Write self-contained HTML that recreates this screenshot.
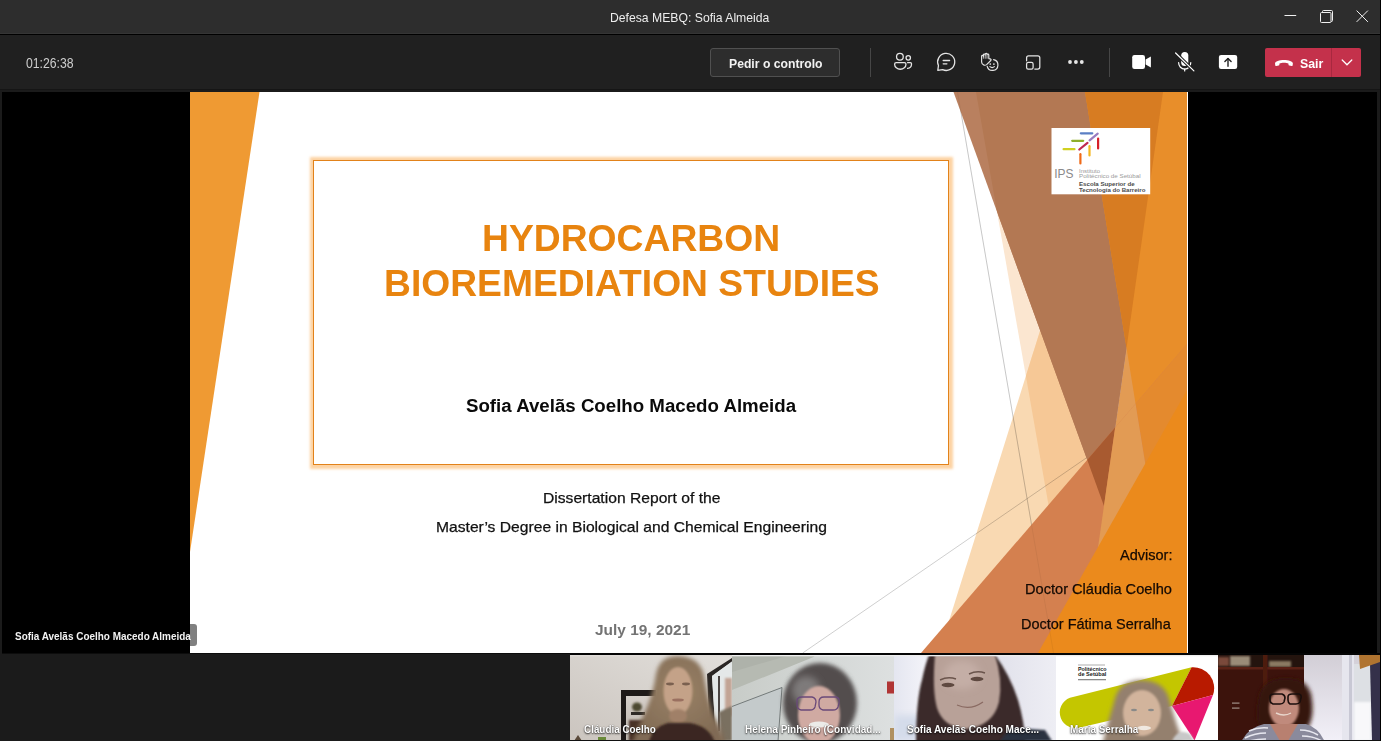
<!DOCTYPE html>
<html><head><meta charset="utf-8">
<style>
*{margin:0;padding:0;box-sizing:border-box}
html,body{width:1381px;height:741px;overflow:hidden;background:#1b1b1b;font-family:"Liberation Sans",sans-serif;position:relative}
.a{position:absolute}
.t{white-space:nowrap;line-height:1}
.sh{text-shadow:0 1px 2px rgba(0,0,0,0.8),0 0 1px rgba(0,0,0,0.6)}
</style></head><body>
<div class="a" style="left:0;top:0;width:1381px;height:33px;background:#2d2d2d"></div>
<div class="a" style="left:0;top:33px;width:1381px;height:1px;background:#353535"></div>
<div class="a" style="left:0;top:34px;width:1381px;height:1px;background:#000"></div>
<div class="a t" style="left:610.07px;top:11.29px;font-size:13.20px;font-weight:normal;color:#ededed;transform:scaleX(0.9251);transform-origin:0 0">Defesa MEBQ: Sofia Almeida</div>
<div class="a" style="left:0;top:35px;width:1381px;height:54px;background:#202020"></div>
<div class="a" style="left:0;top:89px;width:1381px;height:1px;background:#151515"></div>
<div class="a" style="left:0;top:90px;width:1381px;height:2px;background:#1b1b1b"></div>
<div class="a t" style="left:25.81px;top:56.68px;font-size:13.80px;font-weight:normal;color:#cdcdcd;transform:scaleX(0.8865);transform-origin:0 0">01:26:38</div>
<div class="a" style="left:710px;top:48px;width:130px;height:29px;background:#2d2d2d;border:1px solid #505050;border-radius:3px"></div>
<div class="a t" style="left:729.18px;top:56.90px;font-size:13.30px;font-weight:bold;color:#f2f2f2;transform:scaleX(0.9170);transform-origin:0 0">Pedir o controlo</div>
<div class="a" style="left:870px;top:48px;width:1px;height:29px;background:#464646"></div>
<div class="a" style="left:1109px;top:48px;width:1px;height:29px;background:#464646"></div>
<div class="a" style="left:1265px;top:48px;width:96px;height:29px;background:#c4314b;border-radius:2px"></div>
<div class="a" style="left:1331px;top:48px;width:1px;height:29px;background:#a8283f"></div>
<div class="a t" style="left:1299.85px;top:57.15px;font-size:13.00px;font-weight:bold;color:#ffffff;transform:scaleX(0.9478);transform-origin:0 0">Sair</div>
<svg class="a" style="left:0;top:0" width="1381" height="92" viewBox="0 0 1381 92">
<g stroke="#f0f0f0" stroke-width="1" fill="none">
<line x1="1284.5" y1="15.5" x2="1296.2" y2="15.5"/>
<rect x="1320.5" y="12.5" width="10.5" height="10" rx="1"/>
<path d="M1322.5,12.5 V11.5 a1,1 0 0 1 1,-1 H1331.5 a1,1 0 0 1 1,1 V20.5 a1,1 0 0 1 -1,1 H1331"/>
<line x1="1356.6" y1="10.6" x2="1367.9" y2="21.9"/>
<line x1="1367.9" y1="10.6" x2="1356.6" y2="21.9"/>
</g>
<g stroke="#e4e4e4" stroke-width="1.3" fill="none" stroke-linecap="round" stroke-linejoin="round">
<circle cx="899.9" cy="56.8" r="3.35"/>
<circle cx="908.25" cy="57.85" r="2.2"/>
<path d="M896.2,62.55 H904.4 A1.55,1.55 0 0 1 905.95,64.1 V64.5 A5.65,4.75 0 0 1 894.65,64.5 V64.1 A1.55,1.55 0 0 1 896.2,62.55 Z"/>
<path d="M907.6,62.65 H910.4 A1.1,1.1 0 0 1 911.5,63.75 V64.3 A4.3,4.2 0 0 1 907.6,68.4"/>
<path d="M938.45,65.5 L937.8,70.3 L942.6,69.65 A8.55,8.55 0 1 0 938.45,65.5 Z"/>
<line x1="943.2" y1="60.5" x2="949.6" y2="60.5"/>
<line x1="943.2" y1="63.8" x2="946.9" y2="63.8"/>
<path d="M981.6,62 V56.2 a0.9,0.9 0 0 1 1.8,0 V54.9 a0.9,0.9 0 0 1 1.8,0 V54.3 a0.9,0.9 0 0 1 1.8,0 V54.9 a0.9,0.9 0 0 1 1.8,0 V58.6 L990.2,58.9 Q991.6,59.4 990.8,60.5 L986.6,64.6 Q985.4,65.6 984,65.1 Q981.6,64.2 981.6,62 Z" stroke-width="1.15"/>
<line x1="983.4" y1="55.8" x2="983.4" y2="58.3" stroke-width="0.8"/>
<line x1="985.2" y1="55.2" x2="985.2" y2="58.3" stroke-width="0.8"/>
<line x1="987" y1="55.8" x2="987" y2="58.3" stroke-width="0.8"/>
<path d="M993.6,59.6 A5.45,5.45 0 1 1 987.2,66.3" stroke-width="1.2"/>
<path d="M989.9,66.7 Q992.1,68.6 994.4,66.7" stroke-width="1.1"/>
<path d="M1026.6,60.8 V57.8 a2,2 0 0 1 2,-2 H1037.8 a2,2 0 0 1 2,2 V67 a2,2 0 0 1 -2,2 H1034.8" stroke-width="1.25"/>
<rect x="1026.6" y="62.3" width="6.5" height="6.7" rx="1.6" stroke-width="1.25"/>
</g>
<g fill="#e6e6e6">
<circle cx="990.3" cy="64" r="0.85"/><circle cx="993.9" cy="64.1" r="0.85"/>
<circle cx="1070" cy="62" r="1.9"/><circle cx="1075.9" cy="62" r="1.9"/><circle cx="1081.8" cy="62" r="1.9"/>
</g>
<g fill="#ffffff">
<rect x="1132.2" y="54.9" width="12.8" height="14.1" rx="2.3"/>
<polygon points="1145.6,59.6 1150.9,56.6 1150.9,67.5 1145.6,64.6"/>
<rect x="1181.2" y="52" width="7.1" height="14" rx="3.55"/>
<rect x="1218.9" y="54.9" width="18.3" height="14.1" rx="2.2"/>
</g>
<g fill="none" stroke-linecap="round">
<path d="M1178.6,62.6 A6.1,6.6 0 0 0 1190.8,62.6" stroke="#fff" stroke-width="1.2"/>
<line x1="1184.7" y1="69" x2="1184.7" y2="71" stroke="#fff" stroke-width="1.2"/>
<line x1="1175.6" y1="53" x2="1193.9" y2="70.9" stroke="#202020" stroke-width="3.2"/>
<line x1="1175.6" y1="53" x2="1193.9" y2="70.9" stroke="#fff" stroke-width="1.2"/>
<line x1="1228" y1="58.6" x2="1228" y2="66.3" stroke="#202020" stroke-width="1.4"/>
<polyline points="1224.9,61.6 1228,58.5 1231.1,61.6" stroke="#202020" stroke-width="1.4" stroke-linejoin="round"/>
<polyline points="1342.2,60 1347,64.8 1351.8,60" stroke="#fff" stroke-width="1.25"/>
</g>
<path fill="#fff" d="M1275,63.6 C1275,58.7 1292.9,58.7 1292.9,63.6 L1292.6,65.4 Q1292.4,66.2 1291.6,66.1 L1289.3,65.6 Q1288.5,65.4 1288.5,64.6 L1288.4,63.5 C1286.4,62.4 1281.5,62.4 1279.5,63.5 L1279.4,64.6 Q1279.4,65.4 1278.6,65.6 L1276.3,66.1 Q1275.5,66.2 1275.3,65.4 Z"/>
</svg>
<div class="a" style="left:2px;top:92px;width:1375px;height:561px;background:#000"></div>
<svg class="a" style="left:190px;top:92px" width="998" height="561" viewBox="190 92 998 561">
<defs>
<clipPath id="cB"><polygon points="953.5,92 1163,92 1104,506"/></clipPath>
<clipPath id="cP1"><polygon points="976,92 1163,92 1120,653 1074.5,653"/></clipPath>
<clipPath id="cO1"><polygon points="921,653 1187,653 1187,344"/></clipPath>
</defs>
<rect x="190" y="92" width="998" height="561" fill="#fff"/>
<polygon points="190,92 259.5,92 190,552" fill="#ef9a33"/>
<polygon points="976,92 1163,92 1120,653 1074.5,653" fill="#fbe6d0"/>
<polygon points="1040.7,328.8 1150,560 1130,653 938.9,653" fill="#f9d9b2"/>
<polygon points="1040.7,328.8 1150,560 1130,653 938.9,653" fill="#f6c896" clip-path="url(#cP1)"/>
<polygon points="1126.5,348 1187,348 1187,653 1083,653" fill="#e29b54"/>
<line x1="957.5" y1="92" x2="1053.5" y2="653" stroke="#000" stroke-opacity="0.24" stroke-width="0.75"/>
<line x1="802.7" y1="653" x2="1187" y2="388.7" stroke="#000" stroke-opacity="0.28" stroke-width="0.7"/>
<polygon points="953.5,92 1163,92 1104,506" fill="#b9805f"/>
<polygon points="976,92 1163,92 1120,653 1074.5,653" fill="#b37853" clip-path="url(#cB)"/>
<polygon points="1085,92 1187,92 1187,653 1176,653" fill="#e88e2a"/>
<polygon points="1085,92 1187,92 1187,653 1176,653" fill="#d77c22" clip-path="url(#cB)"/>
<polygon points="921,653 1187,653 1187,344" fill="#d4804f"/>
<polygon points="953.5,92 1163,92 1104,506" fill="#a85a30" clip-path="url(#cO1)"/>
<polygon points="1085,92 1187,92 1187,653 1176,653" fill="#e48a2e" clip-path="url(#cO1)"/>
<polygon points="1126.5,348 1176,653 1083,653" fill="#e29b54" clip-path="url(#cO1)"/>
<polygon points="1038,653 1187,653 1187,390" fill="#eb8a1c"/>
<line x1="957.5" y1="92" x2="1053.5" y2="653" stroke="#000" stroke-opacity="0.07" stroke-width="0.75"/>
<rect x="1051.5" y="128" width="98.7" height="66.3" fill="#fff"/>
<g stroke-linecap="round" stroke-width="2.2">
<line x1="1080.8" y1="133.3" x2="1092.3" y2="133.3" stroke="#5b7fc4"/>
<line x1="1089.6" y1="140.3" x2="1097.7" y2="133.7" stroke="#9a7cc0"/>
<line x1="1072.2" y1="140.8" x2="1083.2" y2="140.8" stroke="#8fae2a"/>
<line x1="1098.1" y1="138.6" x2="1098.1" y2="148.4" stroke="#d6202a"/>
<line x1="1079.3" y1="149.5" x2="1087.5" y2="142.9" stroke="#c02850"/>
<line x1="1063.6" y1="149.2" x2="1074.5" y2="149.2" stroke="#d0d020"/>
<line x1="1089.5" y1="146.2" x2="1089.5" y2="155.4" stroke="#f5b820"/>
<line x1="1080.4" y1="154.2" x2="1080.4" y2="163.5" stroke="#f06a18"/>
</g>
<text x="1054.3" y="177.8" font-family="Liberation Sans" font-size="12.2" fill="#8a8a8a" textLength="19.3" lengthAdjust="spacingAndGlyphs">IPS</text>
<text x="1079" y="172.9" font-family="Liberation Sans" font-size="5.6" fill="#9a9a9a" textLength="21" lengthAdjust="spacingAndGlyphs">Instituto</text>
<text x="1079" y="178.3" font-family="Liberation Sans" font-size="5.6" fill="#9a9a9a" textLength="61.6" lengthAdjust="spacingAndGlyphs">Politécnico de Setúbal</text>
<text x="1079" y="185.9" font-family="Liberation Sans" font-size="5.8" font-weight="bold" fill="#4a4a4a" textLength="55.6" lengthAdjust="spacingAndGlyphs">Escola Superior de</text>
<text x="1079" y="191.6" font-family="Liberation Sans" font-size="5.8" font-weight="bold" fill="#4a4a4a" textLength="66.4" lengthAdjust="spacingAndGlyphs">Tecnologia do Barreiro</text>
</svg>
<div class="a" style="left:313px;top:160px;width:636px;height:305px;border:1.5px solid #e2821a;box-shadow:0 0 2.5px 3.5px rgba(252,200,140,0.8)"></div>
<div class="a t" style="left:482.41px;top:220.01px;font-size:37.40px;font-weight:bold;color:#e8840f;transform:scaleX(0.9966);transform-origin:0 0">HYDROCARBON</div>
<div class="a t" style="left:384.01px;top:265.01px;font-size:37.40px;font-weight:bold;color:#e8840f;transform:scaleX(0.9956);transform-origin:0 0">BIOREMEDIATION STUDIES</div>
<div class="a t" style="left:466.23px;top:396.03px;font-size:19.20px;font-weight:bold;color:#0a0a0a;transform:scaleX(0.9734);transform-origin:0 0">Sofia Avelãs Coelho Macedo Almeida</div>
<div class="a t" style="left:542.64px;top:491.44px;font-size:14.80px;font-weight:normal;color:#111;transform:scaleX(1.0572);transform-origin:0 0;-webkit-text-stroke:0.25px currentColor">Dissertation Report of the</div>
<div class="a t" style="left:436.14px;top:520.04px;font-size:14.80px;font-weight:normal;color:#111;transform:scaleX(1.0576);transform-origin:0 0;-webkit-text-stroke:0.25px currentColor">Master’s Degree in Biological and Chemical Engineering</div>
<div class="a t" style="left:594.90px;top:622.30px;font-size:15.20px;font-weight:bold;color:#737373;transform:scaleX(1.0161);transform-origin:0 0">July 19, 2021</div>
<div class="a t" style="left:1119.80px;top:546.57px;font-size:15.00px;font-weight:normal;color:#140a04;transform:scaleX(0.9679);transform-origin:0 0;-webkit-text-stroke:0.25px currentColor">Advisor:</div>
<div class="a t" style="left:1025.13px;top:581.47px;font-size:15.00px;font-weight:normal;color:#140a04;transform:scaleX(0.9732);transform-origin:0 0;-webkit-text-stroke:0.25px currentColor">Doctor Cláudia Coelho</div>
<div class="a t" style="left:1021.43px;top:616.17px;font-size:15.00px;font-weight:normal;color:#140a04;transform:scaleX(0.9656);transform-origin:0 0;-webkit-text-stroke:0.25px currentColor">Doctor Fátima Serralha</div>
<div class="a" style="left:186px;top:624px;width:11px;height:21.5px;background:#808080;border-radius:3px"></div>
<div class="a" style="left:2px;top:620px;width:188px;height:30px;background:#000"></div>
<div class="a t" style="left:14.70px;top:630.52px;font-size:10.90px;font-weight:bold;color:#f2f2f2;transform:scaleX(0.9135);transform-origin:0 0">Sofia Avelãs Coelho Macedo Almeida</div>
<div class="a" style="left:2px;top:653px;width:1375px;height:1px;background:#0c0c0c"></div><div class="a" style="left:570px;top:653px;width:811px;height:2px;background:#050505"></div>
<svg class="a" style="left:570px;top:655px" width="811" height="86" viewBox="570 655 811 86">
<defs>
<filter id="b05" x="-30%" y="-30%" width="160%" height="160%"><feGaussianBlur stdDeviation="0.6"/></filter>
<filter id="b1" x="-30%" y="-30%" width="160%" height="160%"><feGaussianBlur stdDeviation="1.2"/></filter>
<filter id="b2" x="-30%" y="-30%" width="160%" height="160%"><feGaussianBlur stdDeviation="2.2"/></filter>
<filter id="b3" x="-30%" y="-30%" width="160%" height="160%"><feGaussianBlur stdDeviation="3.5"/></filter>
<clipPath id="t1"><rect x="570" y="655" width="162" height="85"/></clipPath>
<clipPath id="t2"><rect x="732" y="655" width="162" height="85"/></clipPath>
<clipPath id="t3"><rect x="894" y="655" width="162" height="85"/></clipPath>
<clipPath id="t4"><rect x="1056" y="655" width="162" height="85"/></clipPath>
<clipPath id="t5"><rect x="1218" y="655" width="162" height="85"/></clipPath>
<linearGradient id="g1" x1="0" y1="1" x2="1" y2="0"><stop offset="0" stop-color="#cbc5bf"/><stop offset="1" stop-color="#e2dfdb"/></linearGradient>
<linearGradient id="g1m" x1="0" y1="0" x2="0" y2="1"><stop offset="0" stop-color="#d6d0ca"/><stop offset="1" stop-color="#b8b0a8"/></linearGradient>
<linearGradient id="g2" x1="0" y1="0" x2="1" y2="0"><stop offset="0" stop-color="#c8ccc8"/><stop offset="1" stop-color="#dde0e0"/></linearGradient>
<linearGradient id="g3" x1="0" y1="0" x2="1" y2="0"><stop offset="0" stop-color="#e4e6f0"/><stop offset="0.18" stop-color="#f2f2f8"/><stop offset="0.6" stop-color="#e0e0ea"/><stop offset="1" stop-color="#eeeef4"/></linearGradient>
<linearGradient id="g5w" x1="0" y1="0" x2="0" y2="1"><stop offset="0" stop-color="#d2ced6"/><stop offset="1" stop-color="#f2f0f8"/></linearGradient>
<radialGradient id="hair1" cx="0.5" cy="0.4" r="0.6"><stop offset="0" stop-color="#9a8266"/><stop offset="1" stop-color="#806a54"/></radialGradient>
</defs>
<!-- tile 1 -->
<g clip-path="url(#t1)">
<rect x="570" y="655" width="162" height="85" fill="url(#g1)"/>
<rect x="570" y="655" width="162" height="1.5" fill="#e0dcd8"/>
<rect x="621" y="690" width="35" height="55" fill="#1e1a18"/>
<rect x="626" y="696" width="30" height="50" fill="url(#g1m)"/>
<ellipse cx="637" cy="707" rx="5" ry="4.5" fill="#4e4a30" filter="url(#b1)"/>
<rect x="631" y="712" width="14" height="3" fill="#2e2a26"/>
<rect x="629" y="720" width="28" height="21" fill="#4a3028" filter="url(#b1)"/>
<polygon points="707,674 732,658 732,661.5 712,676 716,741 710,741" fill="#2a2624"/>
<polygon points="712,676 732,661.5 732,741 716,741" fill="#e4e8e8"/>
<rect x="718" y="676" width="2" height="55" fill="#4a4442"/><rect x="725" y="678" width="7" height="38" fill="#c2a494" filter="url(#b1)"/>
<polygon points="719,712 732,706 732,741 721,741" fill="#7a7060" filter="url(#b1)"/>
<path d="M656,674 Q660,655 679,656 Q700,657 704,676 Q708,700 714,716 Q724,732 726,745 L632,745 Q638,726 646,710 Q653,694 656,674 Z" fill="url(#hair1)" filter="url(#b2)"/>
<ellipse cx="678" cy="691" rx="14.5" ry="24" fill="#c4a288" filter="url(#b1)"/>
<ellipse cx="670" cy="684" rx="4" ry="1.4" fill="#7a6050" filter="url(#b05)"/>
<ellipse cx="686" cy="684" rx="4" ry="1.4" fill="#7a6050" filter="url(#b05)"/><ellipse cx="678" cy="700" rx="6" ry="1.6" fill="#9a7060" filter="url(#b05)"/>
<ellipse cx="678" cy="716" rx="9" ry="7" fill="#a08068" filter="url(#b1)"/>
<path d="M648,745 Q652,727 668,723 L690,723 Q710,726 716,745 Z" fill="#3a2620" filter="url(#b1)"/>
<path d="M574,741 L578,735 L582,741 Z" fill="#5a4a3a"/>
<rect x="598" y="737" width="8" height="4" fill="#6a8a3a"/>
</g>
<!-- tile 2 -->
<g clip-path="url(#t2)">
<rect x="732" y="655" width="162" height="85" fill="url(#g2)"/>
<polygon points="732,655 816,655 813,657.3 732,690" fill="#b6bab2"/>
<polygon points="732,655 790,655 732,672" fill="#aeb2aa"/>
<polygon points="732,706.5 782,687.5 778,741 732,741" fill="#c4cacb"/>
<polyline points="732,706.5 782,687.5 778,741" fill="none" stroke="#6a7070" stroke-width="0.9"/>
<rect x="770" y="700" width="2" height="0" fill="none"/>
<ellipse cx="820" cy="703" rx="37" ry="40" fill="#524e4e" filter="url(#b2)"/>
<ellipse cx="806" cy="690" rx="14" ry="14" fill="#7e7a7a" filter="url(#b3)"/>
<ellipse cx="819" cy="715" rx="21" ry="29" fill="#d0aaa2" filter="url(#b1)"/>
<path d="M797,701 Q797,697 802,697 L812,697 Q816,698 816,702 L815,707 Q814,710 810,710 L801,710 Q797,709 797,705 Z M819,702 Q819,697 824,697 L836,697 Q840,698 839,703 L838,707 Q837,710 833,710 L823,710 Q819,709 819,705 Z" fill="none" stroke="#6a4a7a" stroke-width="1.3"/>
<ellipse cx="819" cy="724.5" rx="10" ry="3" fill="#ecebe8" filter="url(#b05)"/>
<rect x="887" y="681.5" width="7" height="12" fill="#b03434" filter="url(#b05)"/>
<rect x="890" y="728" width="4" height="13" fill="#b09060"/>
</g>
<!-- tile 3 -->
<g clip-path="url(#t3)">
<rect x="894" y="655" width="162" height="85" fill="url(#g3)"/>
<rect x="894" y="715" width="30" height="26" fill="#d4dcea" filter="url(#b3)"/>
<path d="M929,655 L995,655 Q1010,675 1018,700 Q1024,720 1026,745 L916,745 Q916,700 922,680 Q925,665 929,655 Z" fill="#3a2c2a" filter="url(#b1)"/>
<path d="M935,655 L995,655 Q1003,680 999,702 Q993,726 966,729 Q943,727 937,708 Q932,690 935,655 Z" fill="#b8a198" filter="url(#b1)"/><ellipse cx="962" cy="675" rx="18" ry="14" fill="#c4aea6" filter="url(#b3)"/>
<ellipse cx="948" cy="685" rx="6.5" ry="2.2" fill="#5e4840" filter="url(#b05)"/><path d="M940,680 Q948,676 956,679" stroke="#6a544c" stroke-width="1.4" fill="none" filter="url(#b05)"/>
<ellipse cx="977" cy="679" rx="6.5" ry="2.2" fill="#5e4840" filter="url(#b05)"/><path d="M969,674 Q977,670 985,673" stroke="#6a544c" stroke-width="1.4" fill="none" filter="url(#b05)"/>
<path d="M957,705 Q970,711 983,702" fill="none" stroke="#8a6a62" stroke-width="1.3" filter="url(#b05)"/>
<path d="M1000,741 L1010,728 L1045,730 L1052,741 Z" fill="#2a3040" filter="url(#b1)"/>
</g>
<!-- tile 4 -->
<g clip-path="url(#t4)">
<rect x="1056" y="655" width="162" height="85" fill="#ffffff"/>
<path d="M1073,697 L1191.6,667.2 L1172,706 L1078,728 A15.5,15.5 0 0 1 1073,697 Z" fill="#c4c600"/>
<path d="M1172,706 L1191.6,667.2 A21,21 0 0 1 1213,695 Z" fill="#b81a00"/>
<polygon points="1172,706 1213,695 1194.5,740.5" fill="#e81870"/>
<g fill="#1a1a1a" font-family="Liberation Sans" font-weight="bold">
<rect x="1078" y="664.6" width="27" height="0.8" fill="#9a9a9a"/>
<text x="1078" y="671" font-size="5" textLength="28.4" lengthAdjust="spacingAndGlyphs">Politécnico</text>
<text x="1078" y="676" font-size="5" textLength="28.4" lengthAdjust="spacingAndGlyphs">de Setúbal</text>
<rect x="1078" y="679.3" width="28" height="0.9" fill="#5a5a5a"/>
</g>
<path d="M1114,702 Q1118,680 1142,680 Q1166,681 1170,702 Q1176,724 1184,745 L1102,745 Q1108,722 1114,702 Z" fill="#94806e" filter="url(#b2)"/>
<ellipse cx="1142" cy="713" rx="19" ry="23" fill="#d2b49c" filter="url(#b1)"/>
<ellipse cx="1134" cy="710" rx="3" ry="1.2" fill="#8a8a88" filter="url(#b05)"/>
<ellipse cx="1151" cy="710" rx="3" ry="1.2" fill="#8a8a88" filter="url(#b05)"/>
<ellipse cx="1144" cy="728" rx="7" ry="2.2" fill="#f0e8e0" filter="url(#b05)"/>
<path d="M1172,741 Q1178,728 1190,734 L1194,741 Z" fill="#c8c8c8" filter="url(#b1)"/>
</g>
<rect x="732" y="655" width="486" height="1.3" fill="#eeeeee"/>
<!-- tile 5 -->
<g clip-path="url(#t5)">
<rect x="1218" y="655" width="162" height="85" fill="url(#g5w)"/>
<rect x="1218" y="655" width="86" height="86" fill="#3c130c"/>
<rect x="1218" y="655" width="86" height="12" fill="#24140e"/>
<rect x="1230" y="656" width="20" height="10" fill="#9a8c78" filter="url(#b1)"/>
<rect x="1218" y="657" width="11" height="9" fill="#7a4a3a" filter="url(#b1)"/>
<rect x="1269" y="661" width="22" height="6" fill="#8a7a62" filter="url(#b1)"/>
<rect x="1218" y="667" width="86" height="2.5" fill="#5a2216" filter="url(#b05)"/>
<rect x="1263" y="655" width="4.5" height="86" fill="#4e1a10" filter="url(#b05)"/>
<rect x="1232" y="702.5" width="7.5" height="1.2" fill="#a09088"/>
<rect x="1232" y="707.5" width="7.5" height="1.2" fill="#a09088"/>
<rect x="1342" y="655" width="12" height="86" fill="#e6e6ee"/>
<rect x="1349" y="655" width="3" height="86" fill="#c8c8d4" filter="url(#b05)"/>
<rect x="1354" y="664" width="17" height="77" fill="#dde0e4"/>
<rect x="1354" y="702" width="17" height="39" fill="#f8f8fa" filter="url(#b1)"/>
<polygon points="1370,664 1380,660 1380,741 1372,741" fill="#34304a"/>
<polygon points="1359,655 1380,655 1380,662 1360,669" fill="#b07430"/>
<path d="M1258,702 Q1260,678 1286,678 Q1311,678 1312,702 Q1314,720 1306,730 L1262,730 Q1254,720 1258,702 Z" fill="#36160e" filter="url(#b2)"/>
<ellipse cx="1284" cy="708" rx="15" ry="19" fill="#c08a7c" filter="url(#b1)"/>
<path d="M1270,697 Q1270,694 1274,694 L1282,694 Q1285,695 1285,698 L1284,702 Q1283,704 1280,704 L1273,704 Q1270,703 1270,700 Z M1288,697 Q1288,694 1292,694 L1299,694 Q1302,695 1301,698 L1300,702 Q1299,704 1296,704 L1290,704 Q1288,703 1288,700 Z" fill="none" stroke="#1a0e0c" stroke-width="1.6"/>
<path d="M1276,713 Q1284,717 1291,713" fill="none" stroke="#e8d6cc" stroke-width="1.4"/>
<path d="M1240,745 Q1246,728 1264,724 L1306,724 Q1320,728 1326,745 Z" fill="#8a8a9c"/>
<g stroke="#e8e8f0" stroke-width="1.5" fill="none">
<path d="M1245,738 Q1255,733 1266,733"/><path d="M1249,731 Q1258,727 1268,728"/><path d="M1242,743 Q1254,739 1266,739"/>
<path d="M1300,730 Q1310,730 1318,735"/><path d="M1302,736 Q1313,736 1322,741"/>
</g>
<path d="M1270,724 L1298,724 L1288,741 L1280,741 Z" fill="#b88070" filter="url(#b05)"/>
</g>
</svg>
<div class="a" style="left:570px;top:740px;width:811px;height:1px;background:#111"></div>
<div class="a t sh" style="left:584.40px;top:724.37px;font-size:11.20px;font-weight:bold;color:#ffffff;transform:scaleX(0.8827);transform-origin:0 0">Cláudia Coelho</div>
<div class="a t sh" style="left:745.20px;top:724.27px;font-size:11.20px;font-weight:bold;color:#ffffff;transform:scaleX(0.8953);transform-origin:0 0">Helena Pinheiro (Convidad...</div>
<div class="a t sh" style="left:907.20px;top:724.27px;font-size:11.20px;font-weight:bold;color:#ffffff;transform:scaleX(0.8979);transform-origin:0 0">Sofia Avelãs Coelho Mace...</div>
<div class="a t sh" style="left:1070.41px;top:724.27px;font-size:11.20px;font-weight:bold;color:#ffffff;transform:scaleX(0.8868);transform-origin:0 0">Maria Serralha</div>
<div class="a" style="left:1380px;top:0;width:1px;height:741px;background:#000"></div>
</body></html>
